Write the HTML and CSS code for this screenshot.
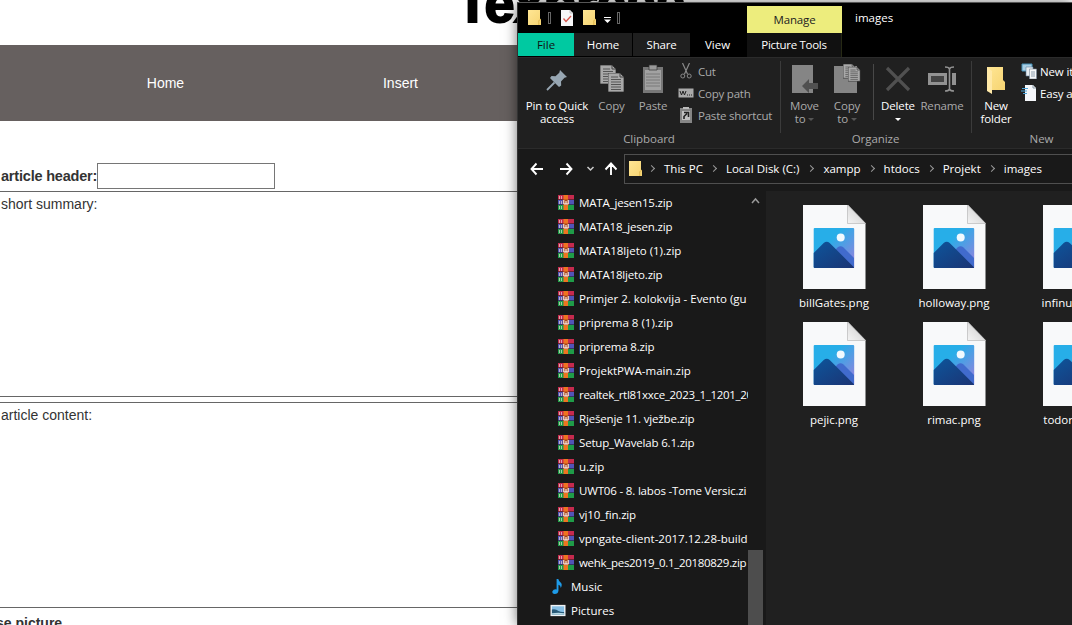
FILE: index.html
```html
<!DOCTYPE html>
<html lang="en">
<head>
<meta charset="utf-8">
<title>Insert article</title>
<link rel="stylesheet" href="styles.css">
</head>
<body>
<svg class="defs" width="0" height="0" aria-hidden="true">
  <defs>
    <linearGradient id="sky" x1="0" y1="0" x2="1" y2="1"><stop offset=".35" stop-color="#27aee8"/><stop offset=".9" stop-color="#8d85de"/></linearGradient>
    <linearGradient id="hill" x1="0" y1="0" x2="1" y2="1"><stop offset="0" stop-color="#0d559b"/><stop offset="1" stop-color="#1b3474"/></linearGradient>
    <linearGradient id="fold" x1="0" y1="0" x2="1" y2="1"><stop offset="0" stop-color="#ffe694"/><stop offset="1" stop-color="#f6d472"/></linearGradient>
    <linearGradient id="curl" x1="0" y1="1" x2="1" y2="0"><stop offset="0" stop-color="#f4f4f4"/><stop offset="1" stop-color="#c9c9c9"/></linearGradient>
    <symbol id="folder" viewBox="0 0 14 16"><path d="M0 0h12v8.500l1 1V15H0z" fill="url(#fold)"/><path d="M10.800 15v-4.500l2-1" fill="none" stroke="#d4a83c" stroke-width=".7"/></symbol>
    <symbol id="rar" viewBox="0 0 16 15"><path d="M0 0h16v4.500H0z" fill="#c62a4e"/><path d="M0 5h16v4.500H0z" fill="#5154b8"/><path d="M0 10h16v5H0z" fill="#1f9c48"/><path d="M1.500 1v3M1.500 6v3M1.500 11v3M3.500 1v3M3.500 6v3M3.500 11v3" stroke="#e7d9d0" stroke-width=".7"/><path d="M5.500 0h4.500v15H5.500z" fill="#ee7420"/><path d="M4.800 4.500h6.200v5.500H4.800z" fill="#a8441a"/><path d="M5.800 5v4h4.400V5M8 6v3" fill="none" stroke="#fff"/></symbol>
    <symbol id="png" viewBox="0 0 63 84"><path d="M0 0h45l17.500 18v66H0z" fill="#f8f9fa"/><path d="M44.500 0v18.500H62.500z" fill="url(#curl)" stroke="#b9b9b9" stroke-width=".7"/><rect x="10.700" y="23" width="40.500" height="40" rx="1" fill="url(#sky)"/><path d="M24 54l10.500-11.500q3-2.500 6 0l10.500 10.500v10H30z" fill="#416bcd"/><path d="M10.700 48l10-10q3-2.500 6 0l24.500 24.500q-.5.500-1 .5H11.700q-1 0-1-1z" fill="url(#hill)"/><circle cx="37.700" cy="32.500" r="4" fill="#f1faff"/></symbol>
    <symbol id="doc" viewBox="0 0 17 20"><path d="M0 0h12l4 4v15H0z" fill="#a9a9a9" stroke="#222" stroke-width=".7"/><path d="M12 0v4h4" fill="none" stroke="#444"/><path d="M3 4h7M3 6.500h10M3 9h10M3 11.500h10M3 14h10M3 16.500h10" stroke="#4c4c4c" stroke-width=".9"/></symbol>
  </defs>
</svg>
<div class="site">
  <header class="masthead">Texpress</header>
  <nav class="menu"><a>Home</a><a>Insert</a></nav>
  <form class="form">
    <div class="row"><label>article header:</label><input class="field" type="text"></div>
    <div class="area summary">short summary:</div>
    <div class="area content">article content:</div>
    <div class="picture">se picture</div>
  </form>
</div>

<section class="window">
  <div class="top">
    <div class="top-left">
      <div class="quick">
        <svg class="q-folder"><use href="#folder"/></svg><i class="bar"></i>
        <svg class="q-check" viewBox="0 0 12 16"><path d="M0 0h9l3 3v13H0z" fill="#f6f6f8"/><path d="M9 0v3h3" fill="none" stroke="#aaa" stroke-width=".7"/><path d="M2.500 8.500l2.500 3L10 6" fill="none" stroke="#d4554c" stroke-width="1.300"/></svg>
        <svg class="q-folder"><use href="#folder"/></svg>
        <svg class="q-drop" viewBox="0 0 7 6"><path d="M0 .5h7" stroke="#fff"/><path d="M0 2.500h7L3.500 6z" fill="#fff"/></svg><i class="bar"></i>
      </div>
      <div class="tabs"><span class="tab file">File</span><span class="tab home">Home</span><span class="tab share">Share</span><span class="tab view">View</span></div>
    </div>
    <div class="manage"><span class="manage-top">Manage</span><span class="manage-sub">Picture Tools</span></div>
    <div class="title">images</div>
  </div>

  <div class="ribbon">
    <div class="group clipboard">
      <div class="tools">
        <div class="tool pin"><svg viewBox="0 0 24 30"><path d="M15 6l7 7-2.500.8-3.500 3.700.2 4-2.200 1.500-9-9L6.500 12l4 .2 3.800-3.500z" fill="#98a7b3"/><path d="M9.500 18.500L2 26" stroke="#98a7b3" stroke-width="1.800"/></svg><span>Pin to Quick<br>access</span></div>
        <div class="tool copy dim"><svg viewBox="0 0 26 30"><use href="#doc" x="1" y="1" width="17" height="20"/><use href="#doc" x="9" y="9" width="17" height="20"/></svg><span>Copy</span></div>
        <div class="tool paste dim"><svg viewBox="0 0 22 30"><path d="M1 3h20v26H1z" fill="#777"/><path d="M3 6h16v20H3z" fill="#a2a2a2"/><path d="M7 1h8v5H7z" fill="#999" stroke="#333" stroke-width=".7"/><path d="M4 10h14M4 13h14M4 16h14M4 19h14M4 22h14" stroke="#6e6e6e" stroke-width=".8"/></svg><span>Paste</span></div>
        <div class="list dim">
          <div><svg viewBox="0 0 16 16"><path d="M4.500 0l5 11M11.500 0l-5 11" stroke="#8a8a8a" stroke-width="1.200"/><circle cx="4.800" cy="13" r="2" fill="none" stroke="#8a8a8a"/><circle cx="11.200" cy="13" r="2" fill="none" stroke="#8a8a8a"/></svg><span>Cut</span></div>
          <div><svg viewBox="0 0 16 16"><path d="M.5 3.500h15v9H.5z" fill="#aaa"/><path d="M2 6l1.500 4L5 6l1.500 4L8 6M9 10h1M11 10h1M13 10h1" fill="none" stroke="#222"/></svg><span>Copy path</span></div>
          <div><svg viewBox="0 0 16 16"><path d="M2 1h12v15H2z" fill="#858585"/><path d="M5 0h6v2H5z" fill="#bbb"/><path d="M4 4h8v9H4z" fill="#c0c0c0"/><path d="M6 12V9.500l3-3M6 5.500h4.500V10" fill="none" stroke="#222" stroke-width="1.600"/></svg><span>Paste shortcut</span></div>
        </div>
      </div>
      <div class="caption">Clipboard</div>
    </div>
    <div class="group organize">
      <div class="tools">
        <div class="tool move dim"><svg viewBox="0 0 28 30"><path d="M1 1h21v28H1z" fill="#858585"/><path d="M11 22l7-7v4h9v6h-9v4z" fill="#505050"/></svg><span>Move<br>to <i class="tri"></i></span></div>
        <div class="tool copyto dim"><svg viewBox="0 0 28 30"><path d="M1 2h23v27H1z" fill="#858585"/><use href="#doc" x="10" y="0" width="13" height="15"/><use href="#doc" x="15" y="3" width="13" height="15"/></svg><span>Copy<br>to <i class="tri"></i></span></div>
        <i class="sep"></i>
        <div class="tool delete"><svg viewBox="0 0 26 30"><path d="M2 4l22 22M24 4L2 26" stroke="#505050" stroke-width="3.200"/></svg><span>Delete<br><i class="tri"></i></span></div>
        <div class="tool rename dim"><svg viewBox="0 0 28 30"><path d="M0 9h28v12H0z" fill="#929292"/><path d="M3 12h13v6H3z" fill="#444"/><path d="M19 9h5v12h-5z" fill="#222"/><path d="M17 3q4 0 4.500 2Q22 3 26 3M21.500 4v22M17 27q4 0 4.500-2 .5 2 4.500 2" fill="none" stroke="#929292" stroke-width="1.600"/></svg><span>Rename</span></div>
      </div>
      <div class="caption">Organize</div>
    </div>
    <div class="group new">
      <div class="tools">
        <div class="tool folder"><svg viewBox="0 0 20 30"><path d="M1 3h16v13l2 2v8H1z" fill="url(#fold)"/><path d="M1 3l5 4v23l-5-3z" fill="#ffe9a8"/></svg><span>New<br>folder</span></div>
        <div class="list">
          <div><svg viewBox="0 0 16 16"><path d="M1 1h10v7H1z" fill="#a9cfe4" stroke="#4690b6"/><path d="M5 4h7v9H5z" fill="#e8eef2" stroke="#61829a" stroke-width=".6"/><path d="M8.500 6h7v10h-7z" fill="#f7f7f7" stroke="#789" stroke-width=".6"/><path d="M10 9h4M10 11h4M10 13h4" stroke="#75899a" stroke-width=".8"/></svg><span>New item</span></div>
          <div><svg viewBox="0 0 16 16"><path d="M4 0h8l3 3v13H4z" fill="#f5f7fa"/><path d="M12 0v3h3" fill="none" stroke="#8a9ba6"/><path d="M1 3.500h6M0 6h6M2 8.500h4" stroke="#4ba3d8"/></svg><span>Easy access</span></div>
        </div>
      </div>
      <div class="caption">New</div>
    </div>
  </div>

  <div class="address">
    <svg class="arrows" viewBox="0 0 94 20"><g fill="none" stroke="#fff" stroke-width="1.900"><path d="M1 10h12M6.500 4.500L1.500 10l5 5.500M30 10h12M36.500 4.500l5 5.500-5 5.500M81 16V5M75.500 10.500L81 4.500l5.500 6"/><path d="M57.500 8l3 3 3-3" stroke-width="1.500" stroke="#ccc"/></g></svg>
    <div class="path"><svg class="p-folder"><use href="#folder"/></svg><i class="chev"></i><span class="c1">This PC</span><i class="chev"></i><span class="c2">Local Disk (C:)</span><i class="chev"></i><span>xampp</span><i class="chev"></i><span>htdocs</span><i class="chev"></i><span>Projekt</span><i class="chev"></i><span>images</span></div>
  </div>

  <div class="body">
    <div class="tree">
      <div class="item tight"><svg><use href="#rar"/></svg><span>MATA_jesen15.zip</span></div>
      <div class="item tight"><svg><use href="#rar"/></svg><span>MATA18_jesen.zip</span></div>
      <div class="item"><svg><use href="#rar"/></svg><span>MATA18ljeto (1).zip</span></div>
      <div class="item tight"><svg><use href="#rar"/></svg><span>MATA18ljeto.zip</span></div>
      <div class="item"><svg><use href="#rar"/></svg><span>Primjer 2. kolokvija - Evento (gu</span></div>
      <div class="item"><svg><use href="#rar"/></svg><span>priprema 8 (1).zip</span></div>
      <div class="item tight"><svg><use href="#rar"/></svg><span>priprema 8.zip</span></div>
      <div class="item"><svg><use href="#rar"/></svg><span>ProjektPWA-main.zip</span></div>
      <div class="item tighter"><svg><use href="#rar"/></svg><span>realtek_rtl81xxce_2023_1_1201_20</span></div>
      <div class="item tight"><svg><use href="#rar"/></svg><span>Rješenje 11. vježbe.zip</span></div>
      <div class="item tight"><svg><use href="#rar"/></svg><span>Setup_Wavelab 6.1.zip</span></div>
      <div class="item"><svg><use href="#rar"/></svg><span>u.zip</span></div>
      <div class="item tight"><svg><use href="#rar"/></svg><span>UWT06 - 8. labos -Tome Versic.zi</span></div>
      <div class="item tight"><svg><use href="#rar"/></svg><span>vj10_fin.zip</span></div>
      <div class="item"><svg><use href="#rar"/></svg><span>vpngate-client-2017.12.28-build</span></div>
      <div class="item tighter"><svg><use href="#rar"/></svg><span>wehk_pes2019_0.1_20180829.zip</span></div>
      <div class="item lib"><svg viewBox="0 0 16 16"><path d="M6.500 0h1.800q.5 2.500 3 4.200Q12.800 6 11 9.500 10.800 6.500 8.500 6V12.500Q8 16 4.500 16 1.500 15.500 2 13 3.500 10.500 6.500 11.200z" fill="#1e9be8"/></svg><span>Music</span></div>
      <div class="item lib"><svg viewBox="0 0 16 16"><path d="M0 2h16v12H0z" fill="#f0f2f4"/><path d="M1.500 3.500h13v9h-13z" fill="#87bfe4"/><path d="M1.500 7q4-1 7 1.500 3 1.500 6 1v3h-13z" fill="#285a78"/><path d="M1.500 11q7-1 13 0v1.500h-13z" fill="#b7dae6"/></svg><span>Pictures</span></div>
    </div>
    <div class="scroll"><svg viewBox="0 0 15 20"><path d="M4 12l3.500-4 3.500 4" fill="none" stroke="#999" stroke-width="1.500"/></svg><div class="thumb"></div></div>
    <div class="files">
      <div class="card"><svg><use href="#png"/></svg><span>billGates.png</span></div>
      <div class="card"><svg><use href="#png"/></svg><span>holloway.png</span></div>
      <div class="card"><svg><use href="#png"/></svg><span>infinum.png</span></div>
      <div class="card"><svg><use href="#png"/></svg><span>pejic.png</span></div>
      <div class="card"><svg><use href="#png"/></svg><span>rimac.png</span></div>
      <div class="card"><svg><use href="#png"/></svg><span>todoric.png</span></div>
    </div>
  </div>
</section>
</body>
</html>
```

FILE: styles.css
```css
* { box-sizing: border-box; }
body { margin: 0; width: 1072px; height: 625px; overflow: hidden; position: relative; background: #fff; }
.defs { position: absolute; }
svg { display: block; flex: none; }
i { font-style: normal; }

.site { height: 625px; overflow: hidden; font-family: "Liberation Sans", Arial, sans-serif; font-size: 14px; color: #333; }
.masthead { height: 45px; padding-left: 456px; font-size: 54px; line-height: 6px; font-weight: 900; letter-spacing: -.5px; color: #000; white-space: nowrap; -webkit-text-stroke: 2px #000; }
.menu { height: 76px; background: #66605f; color: #fff; display: flex; align-items: center; font-size: 14px; }
.menu a { width: 235px; text-align: center; }
.menu a:first-child { margin-left: 48px; }
.row { display: flex; align-items: center; padding: 42px 0 0 1px; font-size: 15px; font-weight: bold; height: 68px; }
.row label { width: 96px; font-size: 14.500px; letter-spacing: -.2px; white-space: nowrap; }
.field { width: 178px; height: 26px; margin: 0; border: 1px solid #767676; background: #fff; }
.area { border-top: 1px solid #666; border-bottom: 1px solid #666; padding: 3px 1px; line-height: 18px; }
.summary { height: 206px; margin-top: 2px; }
.content { height: 206px; margin-top: 5px; }
.picture { font-weight: bold; padding-top: 7px; margin-left: -4px; }

.window { position: absolute; left: 517px; top: 2px; width: 555px; height: 623px; overflow: hidden; background: #191919; border-left: 1px solid #333; border-top: 1px solid #555; color: #fff; font-family: "Open Sans", "Noto Sans", sans-serif; font-size: 11.500px; white-space: nowrap; box-shadow: 0 0 12px rgba(0,0,0,.55); }
.top { display: flex; height: 54px; background: #000; }
.top-left { width: 229px; flex: none; }
.quick { display: flex; align-items: center; height: 30px; padding-left: 10px; }
.q-folder { width: 14px; height: 16px; }
.q-check { width: 12px; height: 16px; margin-right: 10px; }
.q-drop { width: 7px; height: 6px; margin: 3px 0 0 7px; }
.bar { width: 3px; height: 12px; border: 1px solid #666; margin: 0 10px 0 6px; }
.tabs { display: flex; height: 23px; line-height: 24px; text-align: center; }
.file { width: 56px; background: #00c9a1; color: #111; }
.home { width: 58px; background: #1f1f1f; }
.share { width: 57px; background: #1f1f1f; margin-left: 1px; letter-spacing: -.2px; }
.view { width: 55px; }
.manage { width: 95px; flex: none; padding-top: 3px; text-align: center; }
.manage span { display: block; }
.manage-top { height: 27px; line-height: 28px; background: #eded7d; color: #222; letter-spacing: -.15px; }
.manage-sub { height: 24px; line-height: 24px; background: #111; border-right: 1px solid #262914; letter-spacing: -.3px; }
.title { padding: 7px 0 0 13px; }

.ribbon { display: flex; height: 92px; background: #202020; border-top: 1px solid #2b2b2b; border-bottom: 1px solid #2b2b2b; letter-spacing: -.15px; }
.group { padding-top: 6px; position: relative; flex: none; }
.group + .group::before { content: ""; position: absolute; left: 0; top: 3px; height: 72px; border-left: 1px solid #3b3b3b; }
.clipboard { width: 262px; }
.organize { width: 191px; }
.new { width: 141px; }
.tools { display: flex; height: 66px; }
.tool { display: flex; flex-direction: column; align-items: center; text-align: center; line-height: 13px; flex: none; }
.tool svg { height: 30px; margin-bottom: 5px; }
.dim { color: #aaa; }
.caption { line-height: 18px; text-align: center; color: #aaa; letter-spacing: -.05px; }
.pin { width: 78px; } .pin svg { width: 24px; }
.copy { width: 31px; } .copy svg { width: 26px; }
.paste { width: 52px; } .paste svg { width: 22px; }
.list { display: flex; flex-direction: column; margin-top: -4px; flex: none; }
.list div { display: flex; height: 22px; align-items: center; gap: 3px; }
.list svg { width: 16px; height: 16px; }
.clipboard .list { letter-spacing: -.22px; margin-left: -1px; }
.clipboard .list div { gap: 4px; }
.tri { display: inline-block; border: 3px solid transparent; border-top-color: #555; border-bottom: 0; vertical-align: 2px; }
.move { width: 49px; } .move svg { width: 28px; }
.copyto { width: 36px; } .copyto svg { width: 28px; }
.sep { width: 1px; height: 56px; background: #484848; margin-left: 8px; }
.delete { width: 48px; } .delete svg { width: 26px; }
.delete .tri { border-top-color: #fff; }
.rename { width: 40px; } .rename svg { width: 28px; }
.folder { width: 50px; } .folder svg { width: 20px; }

.address { display: flex; align-items: center; height: 42px; padding-bottom: 3px; }
.arrows { width: 94px; height: 20px; margin-left: 12px; }
.path { width: 460px; flex: none; height: 30px; border: 1px solid #4f4f4f; display: flex; align-items: center; padding-left: 4px; }
.p-folder { width: 14px; height: 16px; margin-right: 5px; }
.chev { width: 5px; height: 5px; border: solid #999; border-width: 1px 1px 0 0; transform: rotate(45deg); margin: 0 10px 0 1px; flex: none; }
.path span { padding-right: 7px; flex: none; }
.path .c2 { padding-right: 8px; }

.body { display: flex; height: 434px; overflow: hidden; }
.tree { width: 230px; overflow: hidden; flex: none; margin-top: -1px; }
.item { display: flex; height: 24px; align-items: center; gap: 5px; padding-left: 40px; }
.item svg { width: 16px; height: 15px; }
.tight { letter-spacing: -.17px; }
.tighter { letter-spacing: -.3px; }
.item.lib { padding-left: 32px; }
.scroll { width: 18px; flex: none; border-right: 3px solid #191919; }
.scroll svg { width: 15px; height: 20px; }
.thumb { height: 80px; margin-top: 339px; background: #4d4d4d; }
.files { width: 360px; flex: none; background: #202020; display: grid; grid-template-columns: repeat(3, 120px); grid-auto-rows: 117px; padding: 14px 0 0 8px; }
.card { display: flex; flex-direction: column; align-items: center; }
.card svg { width: 63px; height: 84px; margin-bottom: 6px; }
```
